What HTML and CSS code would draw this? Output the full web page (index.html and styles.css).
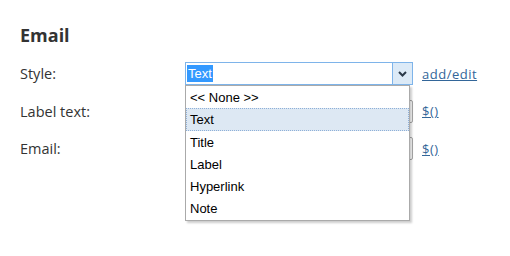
FILE: index.html
```html
<!DOCTYPE html>
<html lang="en">
<head>
    <meta charset="UTF-8">
    <title>Email</title>
    <link rel="stylesheet" href="styles.css">
</head>
<body>
    <div class="panel">
        <h2>Email</h2>
        <div class="row">
            <span class="label">Style:</span>
            <div class="combo">
                <div class="combo-box">
                    <span class="combo-value"><span class="sel">Text</span></span>
                    <span class="combo-btn">
                        <svg width="9" height="6" viewBox="0 0 9 6"><path d="M1 1 L4.5 4.5 L8 1" fill="none" stroke="#2b3a4a" stroke-width="2"/></svg>
                    </span>
                </div>
                <ul class="dropdown">
                    <li>&lt;&lt; None &gt;&gt;</li>
                    <li class="active">Text</li>
                    <li>Title</li>
                    <li>Label</li>
                    <li>Hyperlink</li>
                    <li>Note</li>
                </ul>
            </div>
            <a href="#" class="link">add/edit</a>
        </div>
        <div class="row">
            <span class="label">Label text:</span>
            <div class="field"></div>
            <a href="#" class="link">$()</a>
        </div>
        <div class="row">
            <span class="label">Email:</span>
            <div class="field"></div>
            <a href="#" class="link">$()</a>
        </div>
    </div>
</body>
</html>
```

FILE: styles.css
```css
body {
    margin: 0;
    min-height: 256px;
    background: #fff;
    font-family: "Open Sans", "DejaVu Sans", sans-serif;
    color: #333;
}

.panel {
    padding: 23px 20px 60px;
}

h2 {
    margin: 0 0 8px;
    font-size: 18px;
    font-weight: bold;
    color: #333;
}

.row {
    display: flex;
    align-items: center;
    height: 37.5px;
}

.label {
    width: 165px;
    font-size: 14.5px;
}

.combo {
    position: relative;
    width: 228px;
}

.combo-box {
    display: flex;
    height: 21px;
    border: 1px solid #7eb4ea;
    background: #fff;
}

.combo-value {
    flex: 1;
    padding: 1px 1px;
    font-family: "Liberation Sans", Arial, sans-serif;
    font-size: 13px;
    line-height: 19px;
}

.sel {
    background: #3399ff;
    color: #fff;
    padding: 1px 1px;
}

.combo-btn {
    width: 19px;
    border-left: 1px solid #7eb4ea;
    background: #dceaf7;
    display: flex;
    align-items: center;
    justify-content: center;
}

.dropdown {
    position: absolute;
    top: 23px;
    left: 0;
    width: 223px;
    margin: 0;
    padding: 0 0 1px;
    list-style: none;
    background: #fff;
    border: 1px solid #aaa;
    box-shadow: 2px 2px 2px rgba(0, 0, 0, 0.2);
    z-index: 2;
    font-family: "Liberation Sans", Arial, sans-serif;
    font-size: 13px;
}

.dropdown li {
    height: 22.2px;
    line-height: 22px;
    padding: 0 3px;
    border: 1px solid transparent;
    box-sizing: border-box;
    color: #000;
}

.dropdown li.active {
    background: #dde8f3;
    border: 1px dotted #8fb0d8;
}

.field {
    width: 226px;
    height: 21px;
    border: 1px solid #aaa;
    border-radius: 2px;
}

.link {
    margin-left: 9px;
    font-size: 13px;
    color: #336699;
    letter-spacing: 0.5px;
}
```
